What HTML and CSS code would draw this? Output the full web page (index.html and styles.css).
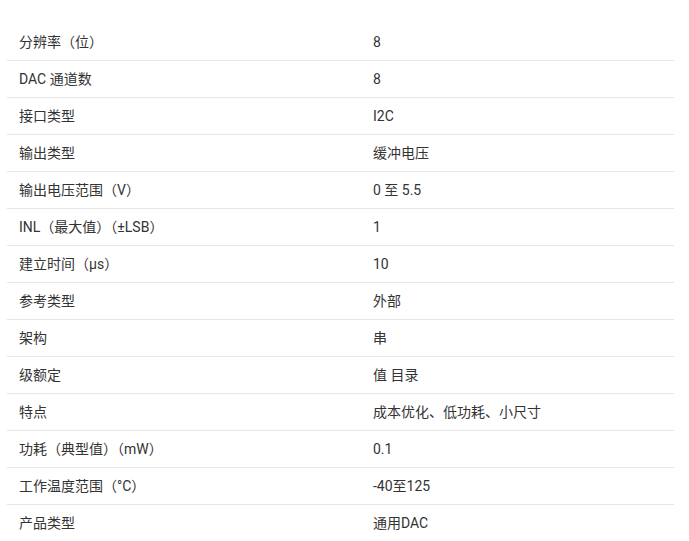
FILE: index.html
```html
<!DOCTYPE html>
<html lang="zh">
<head>
<meta charset="utf-8">
<link rel="stylesheet" href="styles.css">
</head>
<body>
<div class="specs">
  <div class="row"><div class="k">分辨率（位）</div><div class="v">8</div></div>
  <div class="row"><div class="k">DAC 通道数</div><div class="v">8</div></div>
  <div class="row"><div class="k">接口类型</div><div class="v">I2C</div></div>
  <div class="row"><div class="k">输出类型</div><div class="v">缓冲电压</div></div>
  <div class="row"><div class="k">输出电压范围（V）</div><div class="v">0 至 5.5</div></div>
  <div class="row"><div class="k">INL（最大值）（±LSB）</div><div class="v">1</div></div>
  <div class="row"><div class="k">建立时间（µs）</div><div class="v">10</div></div>
  <div class="row"><div class="k">参考类型</div><div class="v">外部</div></div>
  <div class="row"><div class="k">架构</div><div class="v">串</div></div>
  <div class="row"><div class="k">级额定</div><div class="v">值 目录</div></div>
  <div class="row"><div class="k">特点</div><div class="v">成本优化、低功耗、小尺寸</div></div>
  <div class="row"><div class="k">功耗（典型值）（mW）</div><div class="v">0.1</div></div>
  <div class="row"><div class="k">工作温度范围（°C）</div><div class="v">-40至125</div></div>
  <div class="row"><div class="k">产品类型</div><div class="v">通用DAC</div></div>
</div>
</body>
</html>
```

FILE: styles.css
```css
html, body {
  margin: 0;
  padding: 0;
  background: #ffffff;
}
body {
  font-family: Roboto, "Noto Sans CJK SC", sans-serif;
  font-size: 14px;
  color: #333333;
}
.specs {
  margin: 24px 0 0 7px;
  width: 667px;
}
.row {
  display: grid;
  grid-template-columns: 354px 1fr;
  height: 36px;
  align-items: center;
  border-bottom: 1px solid #e6e6e6;
}
.k, .v {
  padding-left: 12px;
  line-height: 18px;
  white-space: nowrap;
}
```
